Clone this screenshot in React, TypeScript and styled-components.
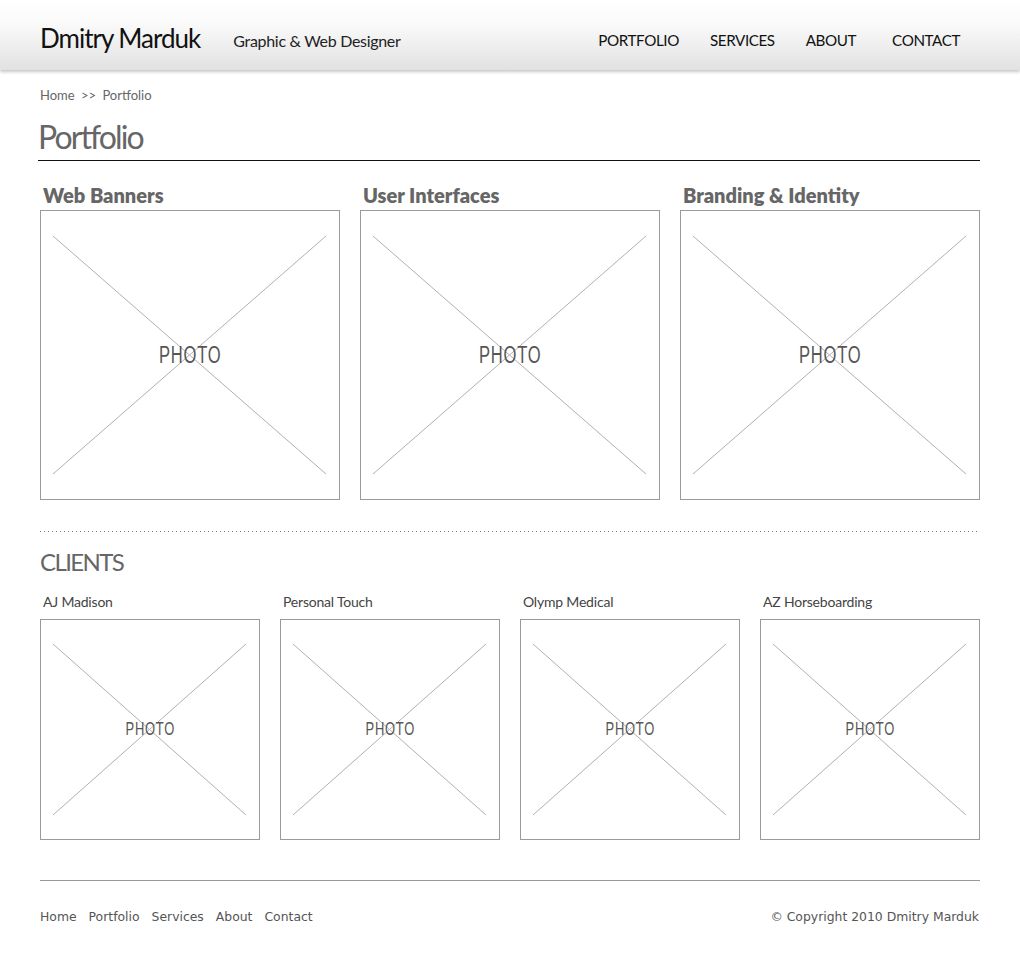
import styled, { createGlobalStyle } from "styled-components";

const GlobalStyle = createGlobalStyle`
    body {
        margin: 0;
        background: #fff;
        font-family: Lato, "Noto Sans", sans-serif;
    }
`;

const HeaderBar = styled.header`
    height: 70px;
    background: linear-gradient(to bottom, #ffffff 0%, #fbfbfb 30%, #e2e2e2 100%);
    box-shadow: 0 2px 3px rgba(0, 0, 0, 0.22);
    display: flex;
    align-items: center;
    padding: 0 60px 0 40px;
`;

const Name = styled.div`
    font-size: 26px;
    color: #111;
    letter-spacing: -1px;
    padding-top: 6px;
`;

const Tagline = styled.div`
    font-size: 16px;
    color: #222;
    margin-left: 33px;
    padding-top: 10px;
    letter-spacing: -0.3px;
`;

const Nav = styled.nav`
    margin-left: auto;
    display: flex;
    gap: 31px;
    padding-top: 9px;
`;

const NavLink = styled.a<{ gap?: number }>`
    font-size: 15.2px;
    color: #111;
    text-decoration: none;
    letter-spacing: -0.4px;
    margin-left: ${(p) => p.gap || 0}px;
`;

const Main = styled.main`
    width: 940px;
    margin-left: 40px;
`;

const Crumbs = styled.div`
    margin-top: 17px;
    font-size: 13px;
    color: #666;
    word-spacing: 3px;
`;

const PageTitle = styled.h1`
    margin: 14px 0 0 -2px;
    font-weight: 400;
    font-size: 32px;
    line-height: 40px;
    letter-spacing: -1.9px;
    color: #666;
    padding-bottom: 3px;
    border-bottom: 1px solid #111;
`;

const Row = styled.div<{ cols: number }>`
    display: grid;
    grid-template-columns: repeat(${(p) => p.cols}, 1fr);
    column-gap: 20px;
`;

const Card = styled.div``;

const CardTitle = styled.h2`
    margin: 0 0 2px 3px;
    font-size: 20px;
    line-height: 26px;
    font-weight: 800;
    color: #666;
`;

const ClientName = styled.div`
    margin: 0 0 9px 3px;
    font-size: 14px;
    line-height: 16px;
    color: #444;
    letter-spacing: -0.2px;
`;

const PhotoBox = styled.div<{ h: number; insetY: number }>`
    position: relative;
    height: ${(p) => p.h}px;
    border: 1px solid #9a9a9a;
    box-sizing: border-box;
    display: flex;
    align-items: center;
    justify-content: center;

    svg {
        position: absolute;
        left: 12px;
        top: ${(p) => p.insetY}px;
        width: calc(100% - 25px);
        height: calc(100% - ${(p) => p.insetY * 2}px);
    }
`;

const PhotoLabel = styled.span<{ size: number }>`
    position: relative;
    font-family: "Liberation Sans Narrow", "Liberation Sans", sans-serif;
    font-size: ${(p) => p.size}px;
    color: #555;
    transform: scaleX(0.72);
    letter-spacing: 1px;
`;

const Photo = ({ h, insetY, size }: { h: number; insetY: number; size: number }) => (
    <PhotoBox h={h} insetY={insetY}>
        <svg viewBox="0 0 100 100" preserveAspectRatio="none">
            <line x1="0" y1="0" x2="100" y2="100" stroke="#b0b0b0" strokeWidth="1" vectorEffect="non-scaling-stroke" />
            <line x1="100" y1="0" x2="0" y2="100" stroke="#b0b0b0" strokeWidth="1" vectorEffect="non-scaling-stroke" />
        </svg>
        <PhotoLabel size={size}>PHOTO</PhotoLabel>
    </PhotoBox>
);

const Portfolio = styled(Row)`
    margin-top: 21px;
`;

const Dots = styled.div`
    margin-top: 31px;
    height: 1px;
    background-image: linear-gradient(to right, #777 1px, transparent 1px);
    background-size: 4px 1px;
`;

const SectionTitle = styled.h2`
    margin: 15px 0 0 0;
    font-size: 24px;
    line-height: 30px;
    font-weight: 400;
    color: #666;
    letter-spacing: -1.6px;
`;

const Clients = styled(Row)`
    margin-top: 17px;
`;

const Footer = styled.footer`
    margin-top: 40px;
    border-top: 1px solid #999;
    padding-top: 28px;
    display: flex;
    justify-content: space-between;
    font-family: "DejaVu Sans", Verdana, sans-serif;
    font-size: 12.4px;
    color: #555;
`;

const FooterLinks = styled.div`
    display: flex;
    gap: 12px;
`;

const FooterLink = styled.a`
    color: #555;
    text-decoration: none;
`;

const Copyright = styled.div`
    padding-right: 1px;
`;

const categories = ["Web Banners", "User Interfaces", "Branding & Identity"];
const clients = ["AJ Madison", "Personal Touch", "Olymp Medical", "AZ Horseboarding"];

export default function App() {
    return (
        <>
            <GlobalStyle />
            <HeaderBar>
                <Name>Dmitry Marduk</Name>
                <Tagline>Graphic &amp; Web Designer</Tagline>
                <Nav>
                    <NavLink href="#">PORTFOLIO</NavLink>
                    <NavLink href="#">SERVICES</NavLink>
                    <NavLink href="#">ABOUT</NavLink>
                    <NavLink href="#" gap={5}>CONTACT</NavLink>
                </Nav>
            </HeaderBar>
            <Main>
                <Crumbs>Home &gt;&gt; Portfolio</Crumbs>
                <PageTitle>Portfolio</PageTitle>
                <Portfolio cols={3}>
                    {categories.map((c) => (
                        <Card key={c}>
                            <CardTitle>{c}</CardTitle>
                            <Photo h={290} insetY={25} size={23} />
                        </Card>
                    ))}
                </Portfolio>
                <Dots />
                <SectionTitle>CLIENTS</SectionTitle>
                <Clients cols={4}>
                    {clients.map((c) => (
                        <Card key={c}>
                            <ClientName>{c}</ClientName>
                            <Photo h={221} insetY={24} size={18} />
                        </Card>
                    ))}
                </Clients>
                <Footer>
                    <FooterLinks>
                        {["Home", "Portfolio", "Services", "About", "Contact"].map((l) => (
                            <FooterLink key={l} href="#">{l}</FooterLink>
                        ))}
                    </FooterLinks>
                    <Copyright>© Copyright 2010 Dmitry Marduk</Copyright>
                </Footer>
            </Main>
        </>
    );
}
